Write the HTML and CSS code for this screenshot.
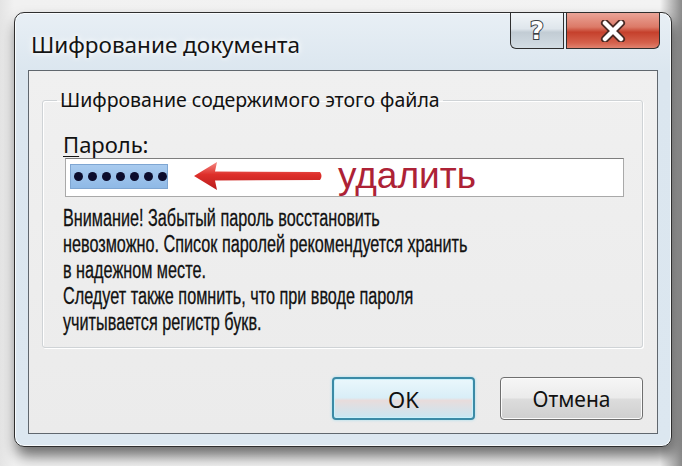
FILE: index.html
```html
<!DOCTYPE html>
<html lang="ru">
<head>
    <meta charset="UTF-8">
    <meta name="viewport" content="width=device-width, initial-scale=1.0">
    <title>Шифрование документа</title>
    <link rel="stylesheet" href="styles.css">
</head>
<body>
    <div class="window">
        <div class="titlebar">
            <div class="title">Шифрование документа</div>
            <div class="caption-buttons">
                <div class="cap-btn help"><span>?</span></div>
                <div class="cap-btn close">
                    <svg width="26" height="22" viewBox="0 0 26 22">
                        <path d="M5 3 L21 19 M21 3 L5 19" stroke="#4a2a24" stroke-width="8" stroke-linecap="round" fill="none"/>
                        <path d="M5 3 L21 19 M21 3 L5 19" stroke="#fff" stroke-width="4.5" stroke-linecap="round" fill="none"/>
                    </svg>
                </div>
            </div>
        </div>

        <div class="client">
            <fieldset class="group">
                <legend>Шифрование содержимого этого файла</legend>
                <div class="group-body">
                    <div class="label"><u>П</u>ароль:</div>
                    <div class="input">
                        <div class="selection">
                            <span class="dot"></span><span class="dot"></span><span class="dot"></span><span class="dot"></span><span class="dot"></span><span class="dot"></span><span class="dot"></span>
                        </div>
                        <svg class="arrow" width="132" height="30" viewBox="0 0 132 30">
                            <defs>
                                <linearGradient id="arrowFill" x1="0" y1="0" x2="0" y2="1">
                                    <stop offset="0" stop-color="#f58a84"/>
                                    <stop offset="0.45" stop-color="#de2f2a"/>
                                    <stop offset="1" stop-color="#b81c1c"/>
                                </linearGradient>
                            </defs>
                            <path d="M2 15 L25 1 L23 10.5 L128 11 Q131 15 128 19 L23 19.5 L25 29 Z" fill="url(#arrowFill)"/>
                        </svg>
                        <span class="note">удалить</span>
                    </div>
                    <div class="warning">
                        Внимание! Забытый пароль восстановить<br>
                        невозможно. Список паролей рекомендуется хранить<br>
                        в надежном месте.<br>
                        Следует также помнить, что при вводе пароля<br>
                        учитывается регистр букв.
                    </div>
                </div>
            </fieldset>

            <div class="buttons">
                <div class="btn default">OK</div>
                <div class="btn">Отмена</div>
            </div>
        </div>
    </div>
</body>
</html>
```

FILE: styles.css
```css
body, html {
    margin: 0;
    padding: 0;
    width: 682px;
    height: 466px;
    overflow: hidden;
    background: linear-gradient(90deg, #e4e4e4 0, #f1f1f1 14px, #f3f3f3 660px, #8a8a8a 682px);
    font-family: "Noto Sans", "Open Sans", sans-serif;
}

body {
    padding-top: 12px;
    padding-left: 14px;
    box-sizing: border-box;
}

.window {
    width: 658px;
    height: 435px;
    box-sizing: border-box;
    border: 1px solid #2e2e2e;
    border-radius: 10px;
    background: linear-gradient(180deg, #e8eff5 0, #dbe6ef 60px, #dce7f0 100%);
    box-shadow: inset 0 0 0 1px #f8fbfd, 2px 9px 14px rgba(0, 0, 0, 0.55);
    padding: 0 13px 12px 13px;
    display: flex;
    flex-direction: column;
}

.titlebar {
    height: 57px;
    display: flex;
    align-items: flex-start;
    margin-right: -2px;
}

.title {
    padding-top: 18px;
    padding-left: 3px;
    font-size: 22.5px;
    line-height: 28px;
    color: #141414;
    text-shadow: 0 0 8px #fff, 0 0 4px #fff;
}

.caption-buttons {
    margin-left: auto;
    display: flex;
    gap: 2px;
}

.cap-btn {
    height: 36px;
    box-sizing: border-box;
    border: 1px solid #2f2f2f;
    border-top: none;
    display: flex;
    align-items: center;
    justify-content: center;
}

.help {
    width: 54px;
    border-radius: 0 0 0 6px;
    background: linear-gradient(180deg, #f1f5f8 0, #dfe6ec 45%, #c2ccd4 55%, #d3dde4 100%);
}

.help span {
    font-family: "DejaVu Sans", sans-serif;
    font-weight: bold;
    font-size: 24px;
    color: #fff;
    -webkit-text-stroke: 2px #3a3f44;
    paint-order: stroke fill;
}

.close {
    width: 94px;
    border-radius: 0 0 6px 0;
    background: linear-gradient(180deg, #eaa497 0, #dc7a68 40%, #c5402c 55%, #d5614c 85%, #e0826e 100%);
}

.client {
    flex: 1;
    border: 1px solid #60676e;
    background: linear-gradient(180deg, #f0f0f0 0, #ebebeb 100%);
    display: flex;
    flex-direction: column;
    padding: 16px 14px 13px 13px;
}

.group {
    margin: 0;
    padding: 0;
    min-width: 0;
    border: 1px solid #cfd3d6;
    border-radius: 3px;
    box-shadow: 1px 1px 0 #fff, inset 1px 1px 0 #fff;
    height: 261px;
    box-sizing: border-box;
}

.group legend {
    margin-left: 14px;
    padding: 0 3px;
    font-size: 19.5px;
    line-height: 26px;
    color: #111;
}

.group-body {
    padding: 19px 18px 0 20px;
}

.label {
    font-size: 22px;
    line-height: 24px;
    color: #111;
}

.label u {
    text-decoration-thickness: 1px;
    text-underline-offset: 3px;
}

.input {
    margin: 2px 0 0 2px;
    height: 39px;
    box-sizing: border-box;
    border: 1px solid #a9a9a9;
    border-top-color: #7e7e7e;
    background: #fff;
    display: flex;
    align-items: center;
    padding: 0 0 3px 4px;
}

.selection {
    height: 25px;
    width: 98px;
    box-sizing: border-box;
    background: linear-gradient(180deg, #a9cbef 0, #8fb9e6 100%);
    border: 1px solid #7fa6d2;
    display: flex;
    align-items: center;
    gap: 5px;
    padding-left: 3px;
}

.dot {
    width: 9px;
    height: 9px;
    border-radius: 50%;
    background: #0c0c2c;
}

.arrow {
    margin-left: 24px;
}

.note {
    margin-left: 14px;
    font-family: "Liberation Sans", Arial, sans-serif;
    font-size: 37px;
    line-height: 30px;
    color: #ad2236;
}

.warning {
    margin-top: 8px;
    width: 560px;
    white-space: nowrap;
    font-family: "Liberation Sans", Arial, sans-serif;
    font-size: 23px;
    line-height: 26px;
    color: #111;
    -webkit-text-stroke: 0.3px #111;
    transform: scaleX(0.705);
    transform-origin: left top;
}

.buttons {
    margin-top: 29px;
    display: flex;
    justify-content: flex-end;
    gap: 25px;
}

.btn {
    width: 143px;
    height: 43px;
    box-sizing: border-box;
    border: 1px solid #6f6f6f;
    border-radius: 4px;
    background: linear-gradient(180deg, #f6f6f6 0, #ebebeb 48%, #dcdcdc 52%, #cfcfcf 100%);
    box-shadow: inset 0 0 0 1px #fbfbfb;
    display: flex;
    align-items: center;
    justify-content: center;
    font-size: 21px;
    color: #111;
}

.btn.default {
    border: 2px solid #3b8aa6;
    background: linear-gradient(180deg, #eaf7fc 0, #d9eef7 48%, #e8dcdc 55%, #c9e6f2 100%);
    box-shadow: 0 0 3px #9fdcef, inset 0 0 0 1px #c8f0fb;
    font-size: 22px;
}
```
